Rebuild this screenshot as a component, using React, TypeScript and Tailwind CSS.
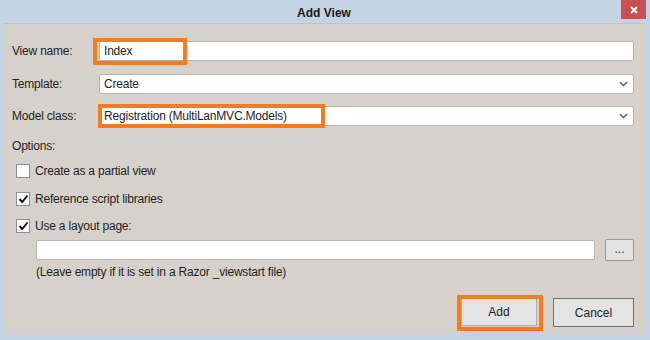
import React from 'react';

const font = { fontFamily: '"Liberation Sans", Arial, sans-serif' };

function Chevron() {
  return (
    <svg width="9" height="6" viewBox="0 0 9 6" className="shrink-0">
      <path d="M1 1 L4.5 4.5 L8 1" fill="none" stroke="#6b6b6b" strokeWidth="1.6" />
    </svg>
  );
}

function Field({ value, select }: { value: string; select?: boolean }) {
  return (
    <div className="flex-1 h-[20px] bg-white border border-[#b4b4b4] rounded-[2px] flex items-center pl-[4px] pr-[5px] text-[12px] tracking-[-0.2px] text-[#1e1e1e]">
      <span className="flex-1">{value}</span>
      {select && <Chevron />}
    </div>
  );
}

function Check({ checked, label }: { checked?: boolean; label: string }) {
  return (
    <div className="h-[16px] flex items-center gap-[5px] ml-[4px]">
      <div className="w-[14px] h-[14px] bg-white border border-[#8e8f8f] flex items-center justify-center">
        {checked && (
          <svg width="11" height="10" viewBox="0 0 11 10">
            <path d="M1.5 5 L4.2 8 L9.5 1.5" fill="none" stroke="#111" strokeWidth="1.9" />
          </svg>
        )}
      </div>
      <span className="text-[12px] tracking-[-0.2px] text-[#1e1e1e]">{label}</span>
    </div>
  );
}

function Highlight({ className }: { className: string }) {
  return <div className={`absolute border-[4px] border-[#f47b20] pointer-events-none ${className}`} />;
}

export default function App() {
  return (
    <div style={font} className="w-[650px] h-[340px] bg-[#c4d4e4] flex flex-col overflow-hidden">
      <div className="h-[23px] relative flex items-center justify-center">
        <span className="text-[12px] font-bold text-[#1b1b1b] -ml-[2px] mt-[2px]">Add View</span>
        <div className="absolute right-[4px] top-0 w-[25px] h-[19px] bg-[#c75050] flex items-center justify-center">
          <svg width="8" height="8" viewBox="0 0 8 8">
            <path d="M1 1 L7 7 M7 1 L1 7" stroke="#fff" strokeWidth="1.8" />
          </svg>
        </div>
      </div>
      <div className="flex-1 ml-[3px] mr-[5px] mb-[6px] bg-[#d6d2cb] border-t border-[#b9c5d1] pl-[9px] pr-[11px] pt-[17px] flex flex-col text-[#1e1e1e]">
        <div className="h-[20px] flex items-center relative">
          <span className="w-[87px] text-[12px] tracking-[-0.2px]">View name:</span>
          <Field value="Index" />
          <Highlight className="left-[81px] -top-[3px] w-[94px] h-[27px]" />
        </div>
        <div className="h-[20px] flex items-center mt-[13px]">
          <span className="w-[87px] text-[12px] tracking-[-0.2px]">Template:</span>
          <Field value="Create" select />
        </div>
        <div className="h-[20px] flex items-center mt-[12px] relative">
          <span className="w-[87px] text-[12px] tracking-[-0.2px]">Model class:</span>
          <Field value="Registration (MultiLanMVC.Models)" select />
          <Highlight className="left-[86px] -top-[2px] w-[227px] h-[24px]" />
        </div>
        <div className="h-[16px] flex items-center mt-[12px] text-[12px] tracking-[-0.2px]">Options:</div>
        <div className="mt-[9px] flex flex-col gap-[12px]">
          <Check label="Create as a partial view" />
          <Check checked label="Reference script libraries" />
        </div>
        <div className="mt-[11px]">
          <Check checked label="Use a layout page:" />
        </div>
        <div className="mt-[5px] ml-[24px] flex items-center h-[22px] gap-[10px]">
          <div className="flex-1 h-[20px] bg-white border border-[#b4b4b4] rounded-[2px]" />
          <div className="w-[29px] h-[22px] bg-[#e3e3e3] border border-[#9a9a9a] rounded-[2px] flex items-center justify-center text-[12px] leading-none pb-[3px]">
            ...
          </div>
        </div>
        <div className="ml-[24px] mt-[3px] h-[16px] flex items-center text-[12px] tracking-[-0.2px]">
          (Leave empty if it is set in a Razor _viewstart file)
        </div>
        <div className="mt-[18px] flex justify-end gap-[16px]">
          <div className="relative w-[76px] h-[28px] bg-[#e4e4e4] border border-[#adadad] flex items-center justify-center text-[12px]">
            Add
            <Highlight className="-left-[5px] -top-[4px] w-[86px] h-[36px]" />
          </div>
          <div className="w-[81px] h-[29px] bg-[#e4e4e4] border border-[#707070] flex items-center justify-center text-[12px]">
            Cancel
          </div>
        </div>
      </div>
    </div>
  );
}
